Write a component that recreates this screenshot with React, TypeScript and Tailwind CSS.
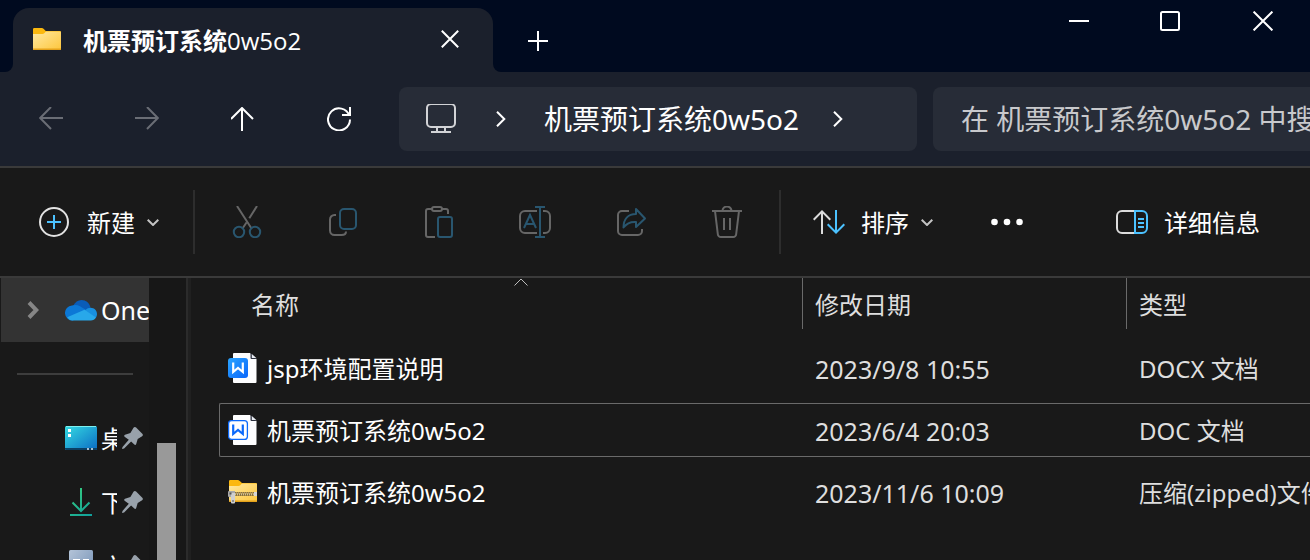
import React from 'react';

interface FileEntry {
    name: string;
    date: string;
    type: string;
    kind: 'docx' | 'doc' | 'zip';
    selected?: boolean;
}

const files: FileEntry[] = [
    { name: 'jsp环境配置说明', date: '2023/9/8 10:55', type: 'DOCX 文档', kind: 'docx' },
    { name: '机票预订系统0w5o2', date: '2023/6/4 20:03', type: 'DOC 文档', kind: 'doc', selected: true },
    { name: '机票预订系统0w5o2', date: '2023/11/6 10:09', type: '压缩(zipped)文件', kind: 'zip' },
];

const Stroke = ({ w, h, width = 2, className, children }: { w: number; h: number; width?: number; className?: string; children: React.ReactNode }) => (
    <svg width={w} height={h} viewBox={`0 0 ${w} ${h}`} fill="none" stroke="currentColor" strokeWidth={width} className={`shrink-0 ${className ?? ''}`}>
        {children}
    </svg>
);

const FolderIcon = () => (
    <svg width="28" height="22" viewBox="0 0 28 22" className="shrink-0">
        <defs>
            <linearGradient id="folder" x1="0" y1="0" x2="1" y2="1">
                <stop offset="0" stopColor="#ffe9a2" />
                <stop offset="1" stopColor="#fdc63c" />
            </linearGradient>
        </defs>
        <path d="M0 1.2A1.2 1.2 0 0 1 1.2 0h7.6c.8 0 1.2.3 1.7.8L12.8 3H27a1 1 0 0 1 1 1v8H0Z" fill="#fbb80f" />
        <path d="M0 6h9.5c.8 0 1.3-.3 1.8-.8l1.4-1.4c.3-.3.7-.4 1.2-.4H27a1 1 0 0 1 1 1V21a1 1 0 0 1-1 1H1a1 1 0 0 1-1-1Z" fill="url(#folder)" />
        <path d="M0 20.500V21a1 1 0 0 0 1 1h26a1 1 0 0 0 1-1v-.5Z" fill="#e5a21a" />
    </svg>
);

const ZipIcon = () => (
    <svg width="29" height="24" viewBox="0 0 29 24" className="shrink-0">
        <defs>
            <linearGradient id="zip" x1="0" y1="0" x2="1" y2="1">
                <stop offset="0" stopColor="#ffe9a2" />
                <stop offset="1" stopColor="#fdc63c" />
            </linearGradient>
        </defs>
        <path d="M1 1.200A1.200 1.200 0 0 1 2.200 0h7.600c.8 0 1.200.3 1.700.8L14 3h14a1 1 0 0 1 1 1v8H1Z" fill="#fbb80f" />
        <path d="M1 6h9.500c.8 0 1.300-.3 1.800-.8l1.400-1.400c.3-.3.7-.4 1.200-.4H28a1 1 0 0 1 1 1V21a1 1 0 0 1-1 1H2a1 1 0 0 1-1-1Z" fill="url(#zip)" />
        <path d="M1 20.500V21a1 1 0 0 0 1 1h26a1 1 0 0 0 1-1v-.5Z" fill="#e5a21a" />
        <path d="M6 12h23v4H6Z" fill="#b8964a" />
        <path d="M7 13h19M8 15h18" stroke="#4f4a40" strokeWidth="1" strokeDasharray="1 1" />
        <path d="M7 14h19" stroke="#f4ecd4" strokeWidth="1" strokeDasharray="1 1" />
        <path d="M26 12h3v4h-3Z" fill="#d6d6d6" />
        <path d="M1 11h6v6H1a1 1 0 0 1-1-1v-4a1 1 0 0 1 1-1Z" fill="#a9a9a9" />
        <path d="M3 13h4v9.500a1 1 0 0 1-1 1H4a1 1 0 0 1-1-1Z" fill="#cfcfcf" />
        <path d="M4.500 20h1v2h-1ZM1.500 12.500h2v2h-2Z" fill="#555" />
    </svg>
);

const WordIcon = ({ filled }: { filled: boolean }) => (
    <svg width="29" height="32" viewBox="0 0 29 32" className="shrink-0">
        <defs>
            <linearGradient id="word" x1="0" y1="0" x2="1" y2="1">
                <stop offset="0" stopColor="#2ba5ff" />
                <stop offset="1" stopColor="#0a66fb" />
            </linearGradient>
        </defs>
        <path d="M6 1h16l6.500 6v23a1 1 0 0 1-1 1H6a1 1 0 0 1-1-1V2a1 1 0 0 1 1-1Z" fill="#fdfdfe" />
        <path d="M22.500 1v5a1 1 0 0 0 1 1h5Z" fill="#2a2e3c" />
        <path d="M23.800 2v4h4.500Z" fill="#e9ecf3" />
        {filled ? (
            <rect x="0" y="6" width="20" height="20" rx="3" fill="url(#word)" />
        ) : (
            <rect x="0.600" y="6.600" width="18.800" height="18.800" rx="3" fill="#fff" stroke="#0b69fb" strokeWidth="1.300" />
        )}
        <path d="M5.200 10.500v9.500L10 16l4.800 4v-9.500" fill="none" stroke={filled ? '#fff' : '#0b69fb'} strokeWidth="2.200" />
    </svg>
);

const CloudIcon = () => (
    <svg width="32" height="21" viewBox="0 0 32 21" className="shrink-0">
        <path d="M8 6C10 2 13 0 16.500 0c4.500 0 8 3 9 7.500L20 14 8 8Z" fill="#0a5cb8" />
        <path d="M7 5.500c2.500-1 5.500-.7 8 .8l6.500 4L8 20.500A7.500 7.500 0 0 1 7 5.500Z" fill="#0c78d6" />
        <path d="M20.500 10c1.500-1.500 3.300-2.300 5.200-2.300 3.500 0 6.300 2.800 6.300 6.300 0 1.500-.5 2.800-1.200 3.800L18 12Z" fill="#1890e0" />
        <path d="m2.200 17.200 17.300-7.500 11.500 7.800c-1 1.800-3 3-5.200 3H7.500c-2.200 0-4-1.300-5.300-3.300Z" fill="#28a8ea" />
    </svg>
);

const DesktopIcon = () => (
    <svg width="32" height="24" viewBox="0 0 32 24" className="shrink-0">
        <defs>
            <linearGradient id="desk" x1="0" y1="0" x2="1" y2="1">
                <stop offset="0" stopColor="#35dbe2" />
                <stop offset="1" stopColor="#0b6cc4" />
            </linearGradient>
        </defs>
        <rect width="32" height="24" rx="1.500" fill="url(#desk)" />
        <path d="M0 22h32v.5a1.500 1.500 0 0 1-1.500 1.500h-29A1.500 1.500 0 0 1 0 22.500Z" fill="#0b3f63" />
        <path d="M1 .5h30" stroke="#7df0f0" />
        <path d="M3 3h3v3H3ZM3 8h3v3H3Z" fill="#fff" />
        <path d="M22 22h2v2h-2ZM26 22h2v2h-2Z" fill="#a9bfd0" />
    </svg>
);

const DownloadIcon = () => (
    <svg width="22" height="28" viewBox="0 0 22 28" fill="none" strokeWidth="2" className="shrink-0">
        <defs>
            <linearGradient id="down" x1="0" y1="0" x2="22" y2="28" gradientUnits="userSpaceOnUse">
                <stop offset="0" stopColor="#3ad07d" />
                <stop offset="1" stopColor="#0f9f9c" />
            </linearGradient>
        </defs>
        <path d="M11.010 0 11 23M2.500 14.500l8.500 8.500 8.500-8.500M0 27l22 .01" stroke="url(#down)" />
    </svg>
);

const DocumentsIcon = () => (
    <svg width="24" height="32" viewBox="0 0 24 32" className="shrink-0">
        <defs>
            <linearGradient id="docs" x1="0" y1="0" x2="1" y2="1">
                <stop offset="0" stopColor="#b4c4d8" />
                <stop offset="1" stopColor="#6f8db3" />
            </linearGradient>
        </defs>
        <rect width="24" height="32" rx="1.500" fill="url(#docs)" />
        <path d="M4 9h7v3H4ZM14 9h6v3h-6ZM4 15h16v2H4Z" fill="#fff" />
    </svg>
);

const PinIcon = () => (
    <svg width="21" height="22" viewBox="0 0 21 22" className="shrink-0 text-[#98a1aa]" fill="currentColor">
        <path d="M11.500.8c.7-.9 1.800-1 2.600-.2l6.200 6.200c.8.800.7 1.900-.2 2.500l-4.400 2.600-1.500 5.200c-.3 1-1.200 1.200-1.900.5l-3.200-3.200-7 7L0 22l.5-2.100 6.300-7.200-4.200-3c-.7-.7-.5-1.600.4-1.900l5.400-1.700Z" />
    </svg>
);

const ChevronDown = () => (
    <Stroke w={12} h={7} width={2} className="text-[#c4c4c4]">
        <path d="m.7.8 5.300 5.200L11.300.8" />
    </Stroke>
);

const ChevronRight = () => (
    <Stroke w={10} h={16}>
        <path d="m1 .8 7.300 7.200L1 15.200" />
    </Stroke>
);

const NavButton = ({ label, dim, children }: { label: string; dim?: boolean; children: React.ReactNode }) => (
    <button aria-label={label} disabled={dim} className={`flex w-24 shrink-0 justify-center ${dim ? 'text-[#6a6d75]' : 'text-white'}`}>
        {children}
    </button>
);

const TitleBar = () => (
    <div className="flex h-[72px] text-white">
        <div className="w-[13px] shrink-0 rounded-br-lg bg-[#000a1f]" />
        <div className="w-[480px] shrink-0 bg-[#000a1f] pt-2">
            <div className="flex h-16 items-center rounded-t-2xl bg-[#1b202c] pr-8 pb-0.5 pl-5">
                <FolderIcon />
                <span className="ml-[22px] pt-1 text-2xl leading-8 font-bold whitespace-nowrap">
                    机票预订系统<span className="font-['Open_Sans'] font-medium">0w5o2</span>
                </span>
                <button aria-label="关闭标签页" className="ml-auto p-0.5">
                    <Stroke w={18} h={18}><path d="m.8.800 16.400 16.400M17.200.8.8 17.200" /></Stroke>
                </button>
            </div>
        </div>
        <div className="flex flex-1 items-start rounded-bl-lg bg-[#000a1f]">
            <button aria-label="新建标签页" className="mt-[31px] ml-[35px]">
                <Stroke w={20} h={20} width={2}><path d="M10 0v20M0 10h20" /></Stroke>
            </button>
            <div className="ml-auto flex">
                <button aria-label="最小化" className="flex h-[42px] w-[90px] items-center justify-center">
                    <Stroke w={20} h={20}><path d="M0 10h20" /></Stroke>
                </button>
                <button aria-label="最大化" className="flex h-[42px] w-[92px] items-center justify-center">
                    <Stroke w={20} h={20}><rect x="1" y="1" width="18" height="18" rx="1.500" /></Stroke>
                </button>
                <button aria-label="关闭" className="flex h-[42px] w-[94px] items-center justify-center">
                    <Stroke w={20} h={20}><path d="m.6.600 18.800 18.800M19.400.6.6 19.400" /></Stroke>
                </button>
            </div>
        </div>
    </div>
);

const AddressRow = () => (
    <div className="flex h-24 items-center border-b-2 border-[#3a3a3a] pl-[3px]">
        <NavButton label="后退" dim>
            <Stroke w={24} h={24}><path d="M24 11H1.500M12 0 1.200 11 12 22" /></Stroke>
        </NavButton>
        <NavButton label="前进" dim>
            <Stroke w={24} h={24}><path d="M0 11h22.500M12 0l10.800 11L12 22" /></Stroke>
        </NavButton>
        <NavButton label="向上">
            <Stroke w={24} h={24}><path d="M11 24V1.500M0 12 11 1l11 11" /></Stroke>
        </NavButton>
        <NavButton label="刷新">
            <Stroke w={24} h={24}><path d="M22.300 8.500A11 11 0 1 0 23 12.500M23 0v8h-8" /></Stroke>
        </NavButton>
        <div className="ml-3 flex h-16 w-[518px] shrink-0 items-center rounded-lg bg-[#272c37] pl-[27px] text-white">
            <svg width="30" height="30" viewBox="0 0 30 30" fill="none" stroke="#d2d3d6" strokeWidth="2" className="shrink-0">
                <rect x="1" y="0" width="28" height="23" rx="4" />
                <path d="M11 23v5M19 23v5M5 28h20" />
            </svg>
            <span className="ml-10 flex"><ChevronRight /></span>
            <span className="ml-[38px] text-[28px] leading-9 whitespace-nowrap">机票预订系统0w5o2</span>
            <span className="ml-[34px] flex"><ChevronRight /></span>
        </div>
        <input
            type="text"
            aria-label="搜索"
            placeholder="在 机票预订系统0w5o2 中搜"
            className="ml-4 h-16 min-w-0 flex-1 rounded-l-lg bg-[#272c37] pl-7 text-[28px] text-white outline-none placeholder:text-[#c8c9cc]"
        />
    </div>
);

const GRAY = '#666666';
const BLUE = '#29566f';

const Tool = ({ label, children }: { label: string; children: React.ReactNode }) => (
    <button aria-label={label} disabled className="flex w-24 shrink-0 justify-center">
        <svg width="32" height="32" viewBox="0 0 32 32" fill="none" strokeWidth="2">{children}</svg>
    </button>
);

const Toolbar = () => (
    <div className="flex h-[110px] items-center border-b-2 border-[#3a3a3a] text-2xl leading-8 whitespace-nowrap text-white">
        <button className="flex w-[193px] shrink-0 items-center pl-[39px]">
            <Stroke w={30} h={30} className="text-[#e2e2e2]">
                <circle cx="15" cy="15" r="14" />
                <path d="M15 8v14M8 15h14" stroke="#4cc2ff" />
            </Stroke>
            <span className="mr-3 ml-[18px] pt-0.5">新建</span>
            <ChevronDown />
        </button>
        <div className="mr-1 h-16 w-0.5 shrink-0 bg-[#2d2d2d]" />
        <Tool label="剪切">
            <path d="M6 0l10 15.500 4.500 7M26 0l-7.700 12.300M15.500 16.500 11.500 22.500" stroke={GRAY} />
            <circle cx="8" cy="26" r="5.200" stroke={BLUE} />
            <circle cx="24" cy="26" r="5.200" stroke={BLUE} />
        </Tool>
        <Tool label="复制">
            <path d="M9 9H7.500A4.500 4.500 0 0 0 3 13.500v11A4.500 4.500 0 0 0 7.500 29h7c2.500 0 4.500-1.200 4.500-3.500" stroke={GRAY} />
            <rect x="13" y="3" width="16" height="20" rx="4" stroke={BLUE} />
        </Tool>
        <Tool label="粘贴">
            <path d="M12 31H5a2 2 0 0 1-2-2V5a2 2 0 0 1 2-2h4M19 3h4a2 2 0 0 1 2 2v3" stroke={GRAY} />
            <rect x="9" y="1" width="10" height="4" rx="2" stroke={GRAY} />
            <rect x="15" y="11" width="14" height="20" rx="2" stroke={BLUE} />
        </Tool>
        <Tool label="重命名">
            <path d="M18 5H6a5 5 0 0 0-5 5v12a5 5 0 0 0 5 5h12M24 5h2a5 5 0 0 1 5 5v12a5 5 0 0 1-5 5h-2" stroke={GRAY} />
            <path d="M21 1v30M16 1h10M16 31h10M5 22l6-13 6 13M7.500 18h7" stroke={BLUE} />
        </Tool>
        <Tool label="共享">
            <path d="M14 5H7a4 4 0 0 0-4 4v16a4 4 0 0 0 4 4h16a4 4 0 0 0 4-4v-2" stroke={GRAY} />
            <path d="M21 3l9 9.500-9 8.500v-5c-5-.5-9 1-12.500 5.500C8.500 13 13 8 21 8Z" stroke={BLUE} strokeLinejoin="round" />
        </Tool>
        <Tool label="删除">
            <path d="M1 5h30M11.500 5a4.500 4.500 0 0 1 9 0M4 5l2.800 23a3 3 0 0 0 3 3h12.400a3 3 0 0 0 3-3L28 5M13 12v12M19 12v12" stroke={GRAY} />
        </Tool>
        <div className="ml-1 h-16 w-0.5 shrink-0 bg-[#2d2d2d]" />
        <button className="ml-8 flex shrink-0 items-center">
            <Stroke w={32} h={24} className="text-[#dcdcdc]">
                <path d="M9 24V2M.7 9.700 9 1.400l8.300 8.300" />
                <path d="M23 0v22M14.700 14.300 23 22.600l8.300-8.300" stroke="#4cc2ff" />
            </Stroke>
            <span className="mr-3 ml-4 pt-0.5">排序</span>
            <ChevronDown />
        </button>
        <button aria-label="查看更多" className="ml-[58px] shrink-0">
            <svg width="32" height="8" viewBox="0 0 32 8" fill="#fff">
                <circle cx="3.500" cy="4" r="3.300" />
                <circle cx="16" cy="4" r="3.300" />
                <circle cx="28.500" cy="4" r="3.300" />
            </svg>
        </button>
        <button className="mr-[50px] ml-auto flex shrink-0 items-center">
            <Stroke w={32} h={24} className="text-[#dcdcdc]">
                <path d="M19 1H6a5 5 0 0 0-5 5v12a5 5 0 0 0 5 5h13" />
                <path d="M19 1h7a5 5 0 0 1 5 5v12a5 5 0 0 1-5 5h-7ZM22 9h6M22 13h6M22 17h6" stroke="#4cc2ff" />
            </Stroke>
            <span className="ml-4 pt-0.5">详细信息</span>
        </button>
    </div>
);

const PinnedItem = ({ icon, label }: { icon: React.ReactNode; label: string }) => (
    <a href="#" className="flex h-16 shrink-0 items-center">
        <span className="ml-16 flex w-8 shrink-0 justify-center">{icon}</span>
        <span className="ml-1 w-4 shrink-0 overflow-hidden pt-0.5 whitespace-nowrap">{label}</span>
        <span className="ml-[5px] flex"><PinIcon /></span>
    </a>
);

const Sidebar = () => (
    <aside className="flex w-[191px] shrink-0 overflow-hidden border-r-[3px] border-[#202020] text-2xl leading-8 text-white">
        <nav className="ml-px flex w-[148px] shrink-0 flex-col">
            <a href="#" className="flex h-16 shrink-0 items-center overflow-hidden bg-[#333]">
                <Stroke w={12} h={18} width={4} className="ml-[26px] text-[#868686]"><path d="m2 1.500 7.300 7.500L2 16.500" /></Stroke>
                <span className="ml-[26px] flex"><CloudIcon /></span>
                <span className="ml-1 text-[25px]">One</span>
            </a>
            <div className="mx-4 my-[31px] h-0.5 shrink-0 bg-[#3d3d3d]" />
            <PinnedItem icon={<DesktopIcon />} label="桌" />
            <PinnedItem icon={<DownloadIcon />} label="下" />
            <PinnedItem icon={<DocumentsIcon />} label="文" />
        </nav>
        <div className="flex flex-1 border-r-2 border-[#2b2b2b] bg-[#171717] pt-[165px] pl-2">
            <div className="w-[19px] bg-[#999]" />
        </div>
    </aside>
);

const FileTable = () => (
    <main className="min-w-0 flex-1 overflow-hidden pl-7">
        <table className="-mt-2 w-full table-fixed border-separate border-spacing-x-0 border-spacing-y-2 text-left text-2xl leading-8 whitespace-nowrap text-[#dedede]">
            <thead>
                <tr className="h-[55px] align-top">
                    <th className="w-[583px] p-0 font-normal">
                        <div className="relative ml-5 flex h-[51px] items-center pt-0.5 pl-3">
                            名称
                            <Stroke w={14} h={8} width={1} className="absolute top-0 left-1/2 -translate-x-1/2 text-[#bdbdbd]"><path d="m.5 7.500 6.500-6.500 6.500 6.500" /></Stroke>
                        </div>
                    </th>
                    <th className="w-[324px] p-0 font-normal">
                        <div className="flex h-[51px] items-center border-l border-[#6a6a6a] pt-0.5 pl-3">修改日期</div>
                    </th>
                    <th className="p-0 font-normal">
                        <div className="flex h-[51px] items-center border-l border-[#6a6a6a] pt-0.5 pl-3">类型</div>
                    </th>
                </tr>
            </thead>
            <tbody>
                {files.map((file) => {
                    const border = file.selected ? 'border-[#6a6a6a]' : 'border-transparent';
                    return (
                        <tr key={file.kind} className="h-[54px]">
                            <td className={`rounded-l-xs border-y border-l p-0 pl-2 text-white ${border}`}>
                                <div className="flex items-center">
                                    {file.kind === 'zip' ? <ZipIcon /> : <WordIcon filled={file.kind === 'docx'} />}
                                    <span className="ml-[10px] pt-0.5">{file.name}</span>
                                </div>
                            </td>
                            <td className={`border-y p-0 pt-0.5 pl-[13px] text-[25px] ${border}`}>{file.date}</td>
                            <td className={`overflow-hidden border-y p-0 pt-0.5 pl-[13px] ${border}`}>{file.type}</td>
                        </tr>
                    );
                })}
            </tbody>
        </table>
    </main>
);

export default function App() {
    return (
        <div className="flex h-screen flex-col overflow-hidden bg-[#191919] font-['Noto_Sans','Noto_Sans_CJK_SC',sans-serif]">
            <header className="shrink-0 bg-[#1b202c]">
                <TitleBar />
                <AddressRow />
            </header>
            <Toolbar />
            <div className="flex min-h-0 flex-1">
                <Sidebar />
                <FileTable />
            </div>
        </div>
    );
}
